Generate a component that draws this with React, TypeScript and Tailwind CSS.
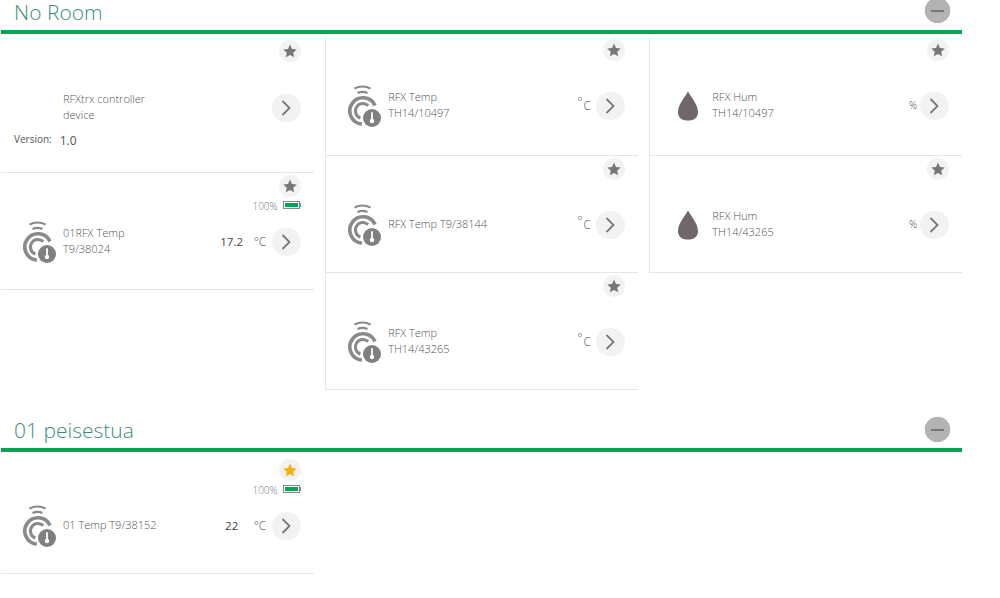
import React from "react";

const SensorIcon = () => (
  <svg width="33" height="42" viewBox="0 0 33 42" fill="none">
    <path d="M6.5 3.6 C11 0.8 18 0.8 22.5 3.6" stroke="#8a8a8a" strokeWidth="2.2" />
    <path d="M9.5 8 C12.5 6.6 16.5 6.6 19.5 8" stroke="#8a8a8a" strokeWidth="2.2" />
    <path d="M27 20.4 A13.2 13.2 0 1 0 13.8 39.1" stroke="#8a8a8a" strokeWidth="3.6" />
    <path d="M20.2 20.6 A7.5 7.5 0 1 0 12.4 33" stroke="#8a8a8a" strokeWidth="3" />
    <circle cx="24" cy="33" r="10" fill="#fff" />
    <circle cx="24" cy="33" r="9" fill="#808080" />
    <path d="M24 28 V34" stroke="#fff" strokeWidth="1.8" strokeLinecap="round" />
    <circle cx="24" cy="36" r="2.2" fill="#fff" />
  </svg>
);

const DropIcon = () => (
  <svg width="20" height="30" viewBox="0 0 20 30">
    <path d="M10 0.5 C12 5 20 13 20 21 C20 27 16 29.5 10 29.5 C4 29.5 0 27 0 21 C0 13 8 5 10 0.5 Z" fill="#6e6868" />
  </svg>
);

const StarButton = ({ on }: { on?: boolean }) => (
  <div className="flex justify-end pr-[13px]">
    <div className="flex h-[22px] w-[22px] items-center justify-center rounded-full bg-[#f2f2f3]">
      <svg width="14" height="14" viewBox="0 0 24 24" fill={on ? "#f5b014" : "#777777"}>
        <path d="M12 1 L15.4 8.4 L23.5 9.3 L17.5 14.8 L19.1 22.8 L12 18.8 L4.9 22.8 L6.5 14.8 L0.5 9.3 L8.6 8.4 Z" />
      </svg>
    </div>
  </div>
);

const Chevron = () => (
  <div className="flex h-[28px] w-[29px] shrink-0 items-center justify-center rounded-full bg-[#f2f2f2]">
    <svg width="12" height="18" viewBox="0 0 12 18" fill="none">
      <path d="M2.5 2 L9.5 9 L2.5 16" stroke="#777777" strokeWidth="1.8" />
    </svg>
  </div>
);

const Battery = () => (
  <div className="mt-[3px] flex h-[12px] items-center justify-end pr-[13px] text-[10px] font-light text-[#7a7a8a]">
    <span>100%</span>
    <div className="mb-[2px] ml-[5px] flex h-[8px] w-[17px] items-center border border-[#888] p-px">
      <div className="h-full w-full bg-[#00a651]" />
    </div>
    <div className="mb-[2px] h-[4px] w-px bg-[#888]" />
  </div>
);

const RaisedUnit = () => (
  <div className="mb-[2px] flex h-[18px] items-start text-[12px] leading-[12px] font-light text-[#555]">
    <span>°</span>
    <span className="mt-[4px] ml-px">C</span>
  </div>
);

type CardProps = {
  lines: string[];
  icon: "temp" | "hum";
  value?: string;
  battery?: boolean;
  on?: boolean;
  first?: boolean;
  leftBorder?: boolean;
};

const Card = ({ lines, icon, value, battery, on, first, leftBorder }: CardProps) => (
  <div
    className={`border-b border-[#e6e6e6] ${first ? "h-[118px] pt-px" : "h-[117px] pt-[2px]"} ${
      leftBorder ? "border-l" : ""
    }`}
  >
    <StarButton on={on} />
    {battery && <Battery />}
    <div className={`flex h-[28px] items-center pr-[13px] ${battery ? "mt-[16px]" : "mt-[31px]"}`}>
      <div className="flex w-[55px] shrink-0 justify-end">
        <div className={`flex w-[33px] justify-center ${icon === "hum" ? "pr-px" : ""}`}>
          {icon === "temp" ? <SensorIcon /> : <DropIcon />}
        </div>
      </div>
      <div className="mb-[2px] ml-[7px] flex-1 text-[11px] leading-[16px] font-light text-[#555]">
        {lines.map((l) => (
          <div key={l}>{l}</div>
        ))}
      </div>
      {value !== undefined ? (
        <>
          <div className="w-[40px] text-center text-[11.5px] text-[#444]">{value}</div>
          <div className="mr-[4px] ml-[2px] w-[14px] text-[12px] font-light text-[#555]">°C</div>
        </>
      ) : icon === "temp" ? (
        <div className="mr-[5px]">
          <RaisedUnit />
        </div>
      ) : (
        <div className="mr-[3px] mb-[2px] text-[10px] font-light text-[#555]">%</div>
      )}
      <Chevron />
    </div>
  </div>
);

const ControllerCard = () => (
  <div className="h-[135px] border-b border-[#e6e6e6] pt-[2px]">
    <StarButton />
    <div className="mt-[32px] flex h-[28px] items-center pr-[13px] pl-[62px]">
      <div className="mb-[2px] w-[100px] flex-1 text-[11px] leading-[16px] font-light text-[#555]">
        <div>RFXtrx controller</div>
        <div>device</div>
      </div>
      <Chevron />
    </div>
    <div className="mt-[10px] flex items-start pl-[13px] text-[#555]">
      <span className="text-[10px] leading-[14px]">Version:</span>
      <span className="mt-[2px] ml-[8px] text-[12px] leading-[14px]">1.0</span>
    </div>
  </div>
);

const RoomHeader = ({ title, lower }: { title: string; lower?: boolean }) => (
  <div className="flex h-[34px] items-start justify-between border-b-4 border-[#00a651] pr-[12px] pl-[13px]">
    <h2 className="text-[21px] leading-[24px] font-light text-[#3a8f78]">{title}</h2>
    <div
      className={`flex h-[25px] w-[25px] items-center justify-center rounded-full bg-[#b3b3b3] shadow-[0_0_1px_#999] ${
        lower ? "-mt-px" : "-mt-[2px]"
      }`}
    >
      <div className="h-[2px] w-[13px] bg-[#777]" />
    </div>
  </div>
);

export default function App() {
  return (
    <div className="h-[598px] w-[1000px] overflow-hidden bg-white font-['Open_Sans',sans-serif]">
      <div className="ml-px w-[961px]">
        <RoomHeader title="No Room" />
        <div className="mt-[4px] grid grid-cols-3 items-start gap-x-[11.5px]">
          <div>
            <ControllerCard />
            <Card icon="temp" lines={["01RFX Temp", "T9/38024"]} value="17.2" battery />
          </div>
          <div>
            <Card icon="temp" lines={["RFX Temp", "TH14/10497"]} first leftBorder />
            <Card icon="temp" lines={["RFX Temp T9/38144"]} leftBorder />
            <Card icon="temp" lines={["RFX Temp", "TH14/43265"]} leftBorder />
          </div>
          <div>
            <Card icon="hum" lines={["RFX Hum", "TH14/10497"]} first leftBorder />
            <Card icon="hum" lines={["RFX Hum", "TH14/43265"]} leftBorder />
          </div>
        </div>
        <div className="mt-[28px]">
          <RoomHeader title="01 peisestua" lower />
          <div className="mt-[5px] grid grid-cols-3 gap-x-[11.5px]">
            <Card icon="temp" lines={["01 Temp T9/38152"]} value="22" battery on />
          </div>
        </div>
      </div>
    </div>
  );
}
